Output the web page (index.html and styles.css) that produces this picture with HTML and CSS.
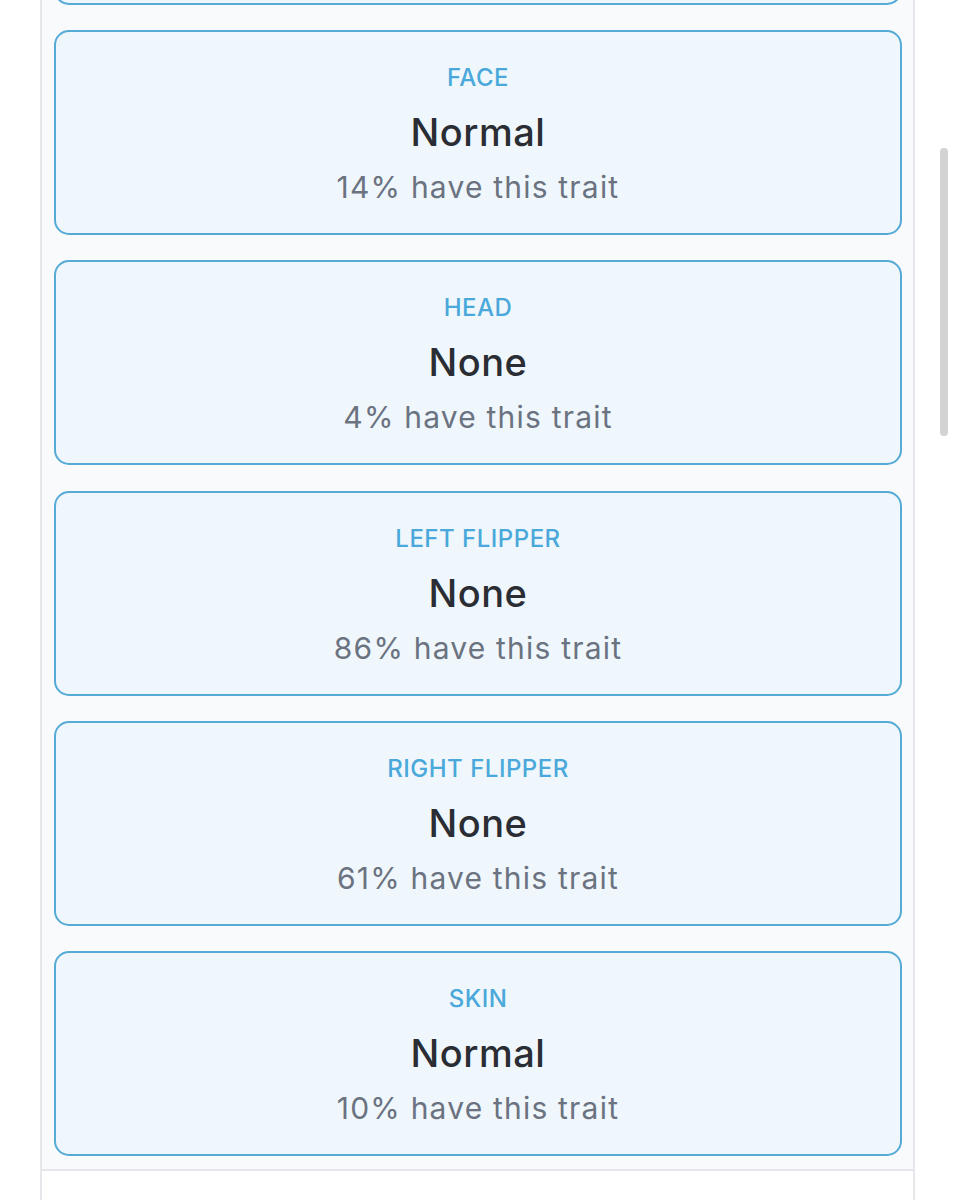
FILE: index.html
```html
<!DOCTYPE html>
<html lang="en">
<head>
<meta charset="utf-8">
<title>Traits</title>
<link rel="stylesheet" href="styles.css">
</head>
<body>
<div class="page">
  <div class="panel">
    <div class="traits">
      <div class="trait trait-offscreen"></div>
      <div class="trait">
        <div class="trait-label">FACE</div>
        <div class="trait-value">Normal</div>
        <div class="trait-rarity">14% have this trait</div>
      </div>
      <div class="trait">
        <div class="trait-label">HEAD</div>
        <div class="trait-value">None</div>
        <div class="trait-rarity">4% have this trait</div>
      </div>
      <div class="trait">
        <div class="trait-label">LEFT FLIPPER</div>
        <div class="trait-value">None</div>
        <div class="trait-rarity">86% have this trait</div>
      </div>
      <div class="trait">
        <div class="trait-label">RIGHT FLIPPER</div>
        <div class="trait-value">None</div>
        <div class="trait-rarity">61% have this trait</div>
      </div>
      <div class="trait">
        <div class="trait-label">SKIN</div>
        <div class="trait-value">Normal</div>
        <div class="trait-rarity">10% have this trait</div>
      </div>
    </div>
    <div class="panel-footer"></div>
  </div>
</div>
<div class="scrollbar"></div>
</body>
</html>
```
FILE: styles.css
```css
html, body {
  margin: 0;
  padding: 0;
  background: #ffffff;
  height: 1200px;
  overflow: hidden;
  font-family: "Inter", "Noto Sans", sans-serif;
}

.page {
  padding-left: 40px;
  width: 875px;
}

.panel {
  margin-top: -200.25px;
  border-left: 2px solid #e6e7ea;
  border-right: 2px solid #e6e7ea;
  background: #ffffff;
}

.traits {
  background: #f9fafc;
  padding: 0 11px 13px 12px;
  border-bottom: 2px solid #e6e7ea;
  display: flex;
  flex-direction: column;
  gap: 25.25px;
}

.trait {
  box-sizing: border-box;
  height: 205px;
  border: 2px solid #55aad6;
  border-radius: 15px;
  background: #eff7fd;
  padding-top: 30px;
  display: flex;
  flex-direction: column;
  align-items: center;
  text-align: center;
}

.trait-label {
  font-size: 24px;
  line-height: 32px;
  font-weight: 500;
  color: #4aa8da;
  letter-spacing: 0.5px;
}

.trait-value {
  margin-top: 14px;
  font-size: 38px;
  line-height: 48px;
  font-weight: 500;
  color: #2a2d33;
  letter-spacing: 0.5px;
}

.trait-rarity {
  margin-top: 11px;
  font-size: 30px;
  line-height: 40px;
  font-weight: 400;
  color: #6b7280;
  letter-spacing: 1.2px;
}

.panel-footer {
  height: 60px;
}

.scrollbar {
  position: absolute;
  left: 940px;
  top: 148px;
  width: 8px;
  height: 288px;
  border-radius: 4px;
  background: #d2d2d2;
}
```
